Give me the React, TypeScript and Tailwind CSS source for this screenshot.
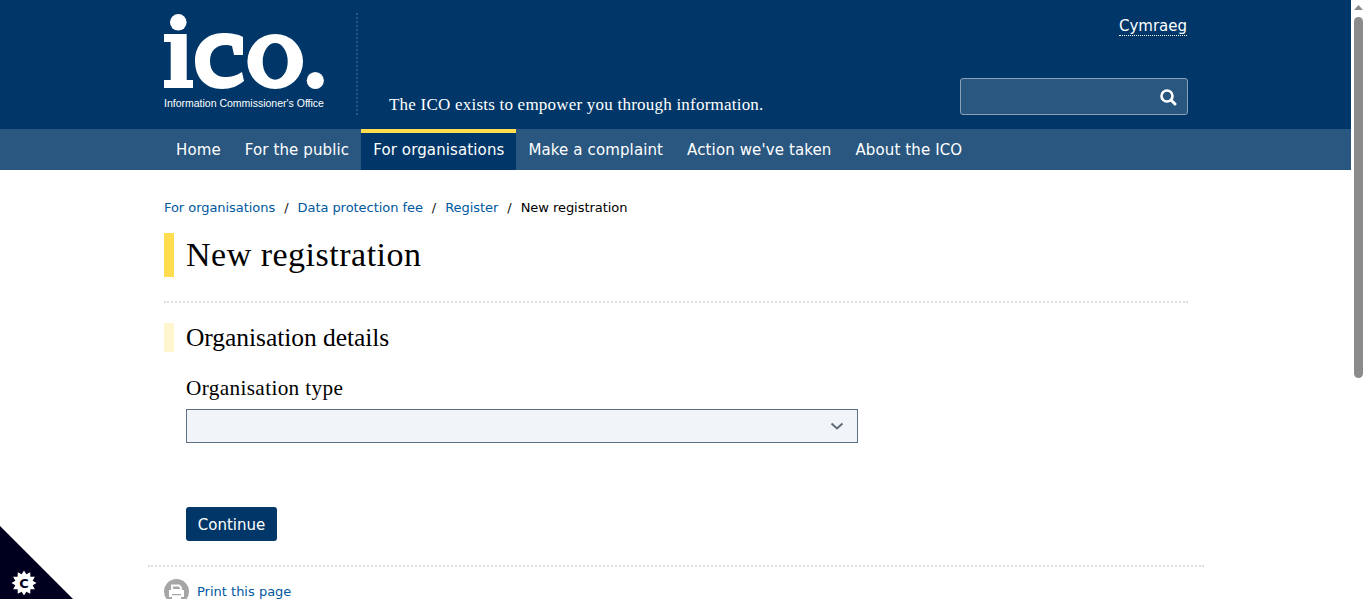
const sans = "font-['Verdana','DejaVu_Sans',sans-serif]";
const serif = "font-['Liberation_Serif',serif]";

function IcoLogo() {
  return (
    <svg width="161" height="97" viewBox="0 0 161 97" aria-label="ICO logo" className="block">
      <circle cx="14.300" cy="9.300" r="8.300" fill="#fff" />
      <path d="M0 21h22.700v46H29v8H0v-8h6.700V29H0z" fill="#fff" />
      <path d="M79 24v18h-9l-2-9c-2-.7-4-1-6-1-10 0-16 6-16 16s6 16 15 16c6 0 11-1 17-5l2 9c-6 5-13 8-22 8-17 0-27-12-27-28 0-17 12-28 28-28 8 0 15 1 20 4z" fill="#fff" />
      <path fillRule="evenodd" d="M83.400 48.500a27.800 27.500 0 1 0 55.600 0a27.800 27.500 0 1 0-55.600 0zM98.700 48.400a12.500 18.300 0 1 0 25 0a12.500 18.300 0 1 0-25 0z" fill="#fff" />
      <circle cx="151.300" cy="67.500" r="8.600" fill="#fff" />
      <text x="0" y="93.500" fill="#fff" fontSize="10.500" fontFamily="'Liberation Sans', sans-serif">
        Information Commissioner's Office
      </text>
    </svg>
  );
}

function CookieBadge() {
  const points = Array.from({ length: 24 }, (_, i) => {
    const r = i % 2 === 0 ? 12.5 : 9;
    const a = (i * Math.PI) / 12;
    return `${(24 + r * Math.sin(a)).toFixed(2)},${(57 - r * Math.cos(a)).toFixed(2)}`;
  }).join(" ");
  return (
    <div className="absolute bottom-0 left-0 h-[73px] w-[73px]">
      <svg width="73" height="73" viewBox="0 0 73 73" className="block">
        <path d="M0 0 73 73H0z" fill="#00001e" />
        <polygon points={points} fill="#fff" />
        <text x="24" y="61.500" fill="#00001e" fontSize="13" fontWeight="700" textAnchor="middle" fontFamily="'DejaVu Sans', sans-serif">C</text>
      </svg>
    </div>
  );
}

function Scrollbar() {
  return (
    <div className="w-[14px] shrink-0 bg-white pl-[3px] pt-[5px]">
      <svg width="9" height="5" viewBox="0 0 9 5" className="block">
        <path d="M4.500 0 9 5H0z" fill="#8b8b8b" />
      </svg>
      <div className="mt-[7px] h-[361px] w-[9px] rounded-[4.500px] bg-[#8b8b8b]" />
    </div>
  );
}

export default function App() {
  const nav = ["Home", "For the public", "For organisations", "Make a complaint", "Action we've taken", "About the ICO"];
  return (
    <div className={`relative flex h-[599px] overflow-hidden bg-white ${sans}`}>
      <div className="min-w-0 flex-1">
        <header className="bg-[#003768]">
          <div className="ml-[164px] flex h-[129px] w-[1024px]">
            <div className="pt-[13px]">
              <IcoLogo />
            </div>
            <div className="ml-[31px] mt-[13px] h-[102px] border-l-2 border-dotted border-[#2a5780]" />
            <p className={`ml-[31px] mt-[95px] ${serif} text-[17px] font-normal leading-[20px] tracking-[0.22px] text-white`}>
              The ICO exists to empower you through information.
            </p>
            <div className="ml-auto flex flex-col items-end">
              <a className="mr-[1px] mt-[17px] border-b border-dotted border-white text-[15px] leading-[18px] text-white">Cymraeg</a>
              <div className="mt-[42px] flex h-[37px] w-[228px] items-center justify-end rounded-[3px] border border-[#8aa1b8] bg-[#2a5780] pr-[10px]">
                <svg width="18" height="18" viewBox="0 0 18 18" fill="none" stroke="#fff" className="block">
                  <circle cx="8" cy="8" r="5.500" strokeWidth="2.600" />
                  <path d="M12.500 12.500 16 16" strokeWidth="3" strokeLinecap="round" />
                </svg>
              </div>
            </div>
          </div>
        </header>
        <nav className="bg-[#2a5780]">
          <ul className="ml-[164px] flex h-[41px] w-[1024px] tracking-[0.12px]">
            {nav.map((item) =>
              item === "For organisations" ? (
                <li key={item} className="border-t-4 border-[#ffdd4f] bg-[#003768] px-[12px] pt-[5px] text-[15px] leading-[24px] text-white">
                  {item}
                </li>
              ) : (
                <li key={item} className="px-[12px] pt-[9px] text-[15px] leading-[24px] text-white">
                  {item}
                </li>
              )
            )}
          </ul>
        </nav>
        <main className="ml-[164px] w-[1024px]">
          <ol className="flex items-center pt-[29px] text-[13px] leading-[18px] tracking-[-0.05px] text-[#00589f]">
            <li>For organisations</li>
            <li className="mx-[9px] text-[#111]">/</li>
            <li>Data protection fee</li>
            <li className="mx-[9px] text-[#111]">/</li>
            <li>Register</li>
            <li className="mx-[9px] text-[#111]">/</li>
            <li className="text-black">New registration</li>
          </ol>
          <div className="mt-[16px] flex h-[44px] border-l-[10px] border-[#ffdd4f] pl-[12px]">
            <h1 className={`${serif} text-[34px] font-normal leading-[44px] tracking-[0.5px] text-black`}>New registration</h1>
          </div>
          <div className="mt-[24px] border-t-2 border-dotted border-[#dedede]" />
          <div className="mt-[20px] flex h-[29px] border-l-[10px] border-[#fff6cf] pl-[12px]">
            <h2 className={`${serif} text-[25.500px] font-normal leading-[29px] tracking-[-0.05px] text-black`}>Organisation details</h2>
          </div>
          <div className="pl-[22px]">
            <label className={`mt-[23px] block ${serif} text-[21.250px] leading-[26px] tracking-[0.35px] text-black`}>Organisation type</label>
            <div className="mt-[8px] flex h-[34px] w-[672px] items-center justify-end border border-[#5d7085] bg-[#f1f4f9] pr-[13px]">
              <svg width="14" height="8" viewBox="0 0 14 8" fill="none" stroke="#5f6b78" strokeWidth="2" className="block">
                <path d="M1.500 1.500 7 6.500l5.500-5" />
              </svg>
            </div>
            <button className="mt-[64px] block h-[34px] w-[91px] rounded-[3px] bg-[#003768] pt-[2px] text-center text-[15px] text-white">Continue</button>
          </div>
        </main>
        <div className="ml-[148px] mt-[24px] w-[1056px] border-t-2 border-dotted border-[#dedede]" />
        <div className="ml-[164px] flex w-[1024px] items-center pt-[12px]">
          <span className="flex h-[25px] w-[25px] items-center justify-center rounded-full bg-[#a6a6a6]">
            <svg width="25" height="25" viewBox="0 0 25 25" className="block">
              <path d="M8 6.500h7l2 2V11H8z" fill="none" stroke="#fff" strokeWidth="1.800" />
              <path d="M5 11h15v7H5z" fill="#fff" />
              <path d="M8 15h9v1.500H8z" fill="#a6a6a6" />
              <path d="M8 16.500h9V20H8z" fill="#fff" />
            </svg>
          </span>
          <a className="ml-[8px] text-[13px] leading-[18px] text-[#00589f]">Print this page</a>
        </div>
      </div>
      <Scrollbar />
      <CookieBadge />
    </div>
  );
}
